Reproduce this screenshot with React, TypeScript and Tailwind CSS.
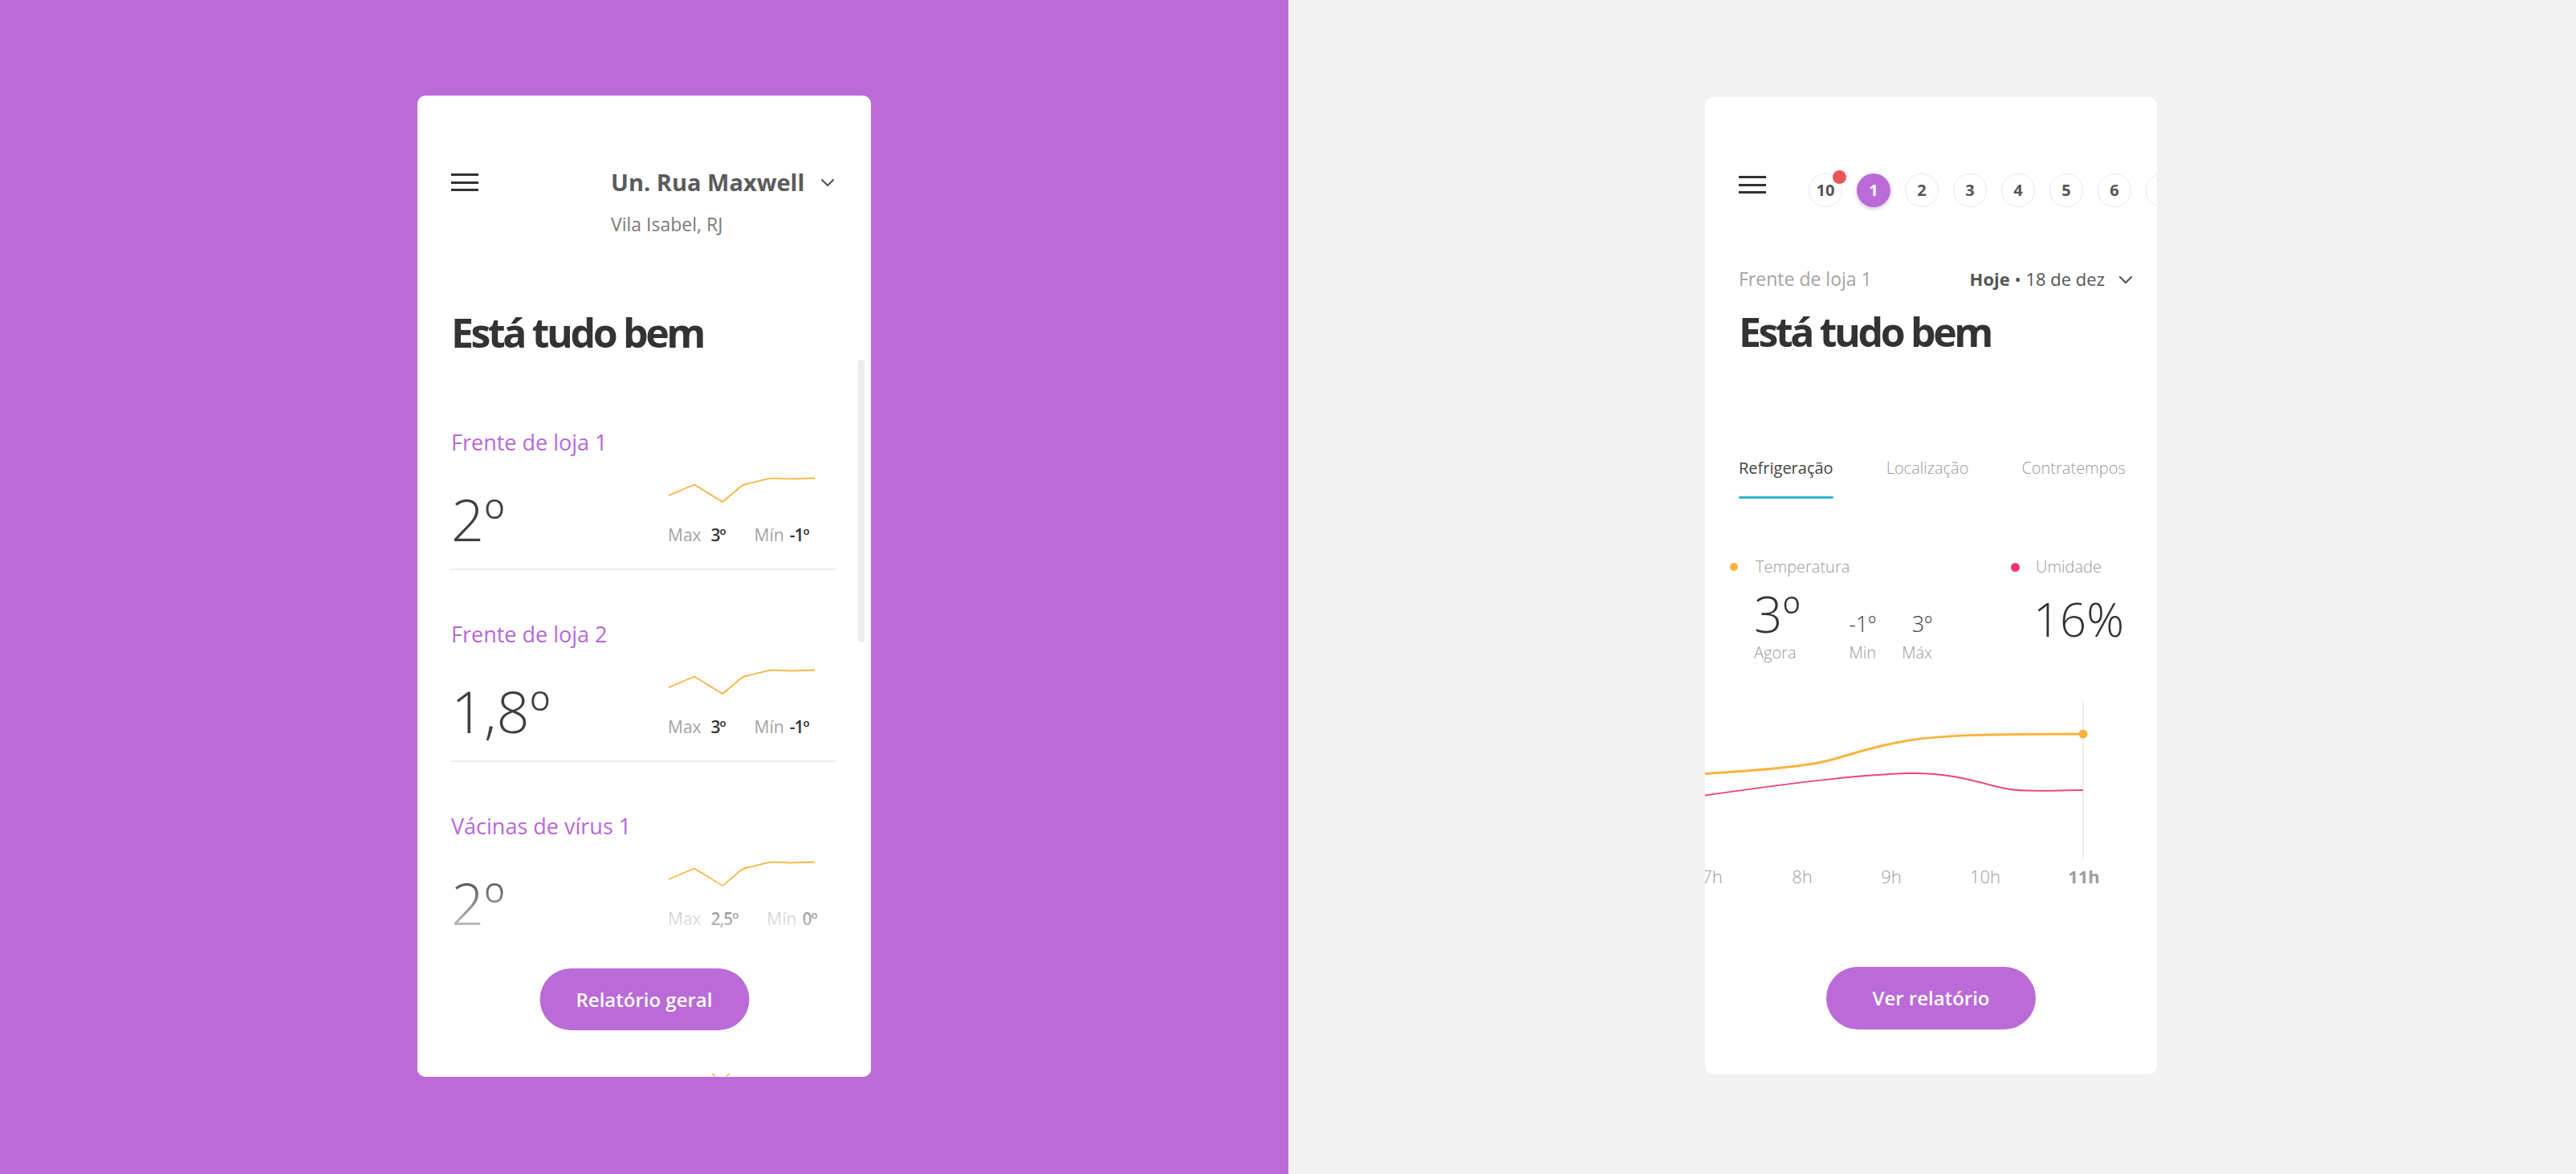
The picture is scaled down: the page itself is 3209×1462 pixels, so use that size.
const stores = [
  { name: 'Frente de loja 1', temp: '2º', max: '3º', min: '-1º' },
  { name: 'Frente de loja 2', temp: '1,8º', max: '3º', min: '-1º' },
  { name: 'Vácinas de vírus 1', temp: '2º', max: '2,5º', min: '0º' },
];

const days = ['2', '3', '4', '5', '6', '7'];

const hours = [
  { label: '7h', x: 9 },
  { label: '8h', x: 121 },
  { label: '9h', x: 232 },
  { label: '10h', x: 349 },
  { label: '11h', x: 472, bold: true },
];

function Hamburger() {
  return (
    <div className="flex h-[22px] w-[34px] shrink-0 flex-col justify-between">
      <span className="h-[3px] bg-[#333]" />
      <span className="h-[3px] bg-[#333]" />
      <span className="h-[3px] bg-[#333]" />
    </div>
  );
}

function Chevron() {
  return (
    <svg width="18" height="11" viewBox="0 0 18 11" fill="none">
      <path d="M2 2 L9 9 L16 2" stroke="#555" strokeWidth="2.2" strokeLinecap="round" strokeLinejoin="round" />
    </svg>
  );
}

function Sparkline() {
  return (
    <svg width="184" height="32" viewBox="0 0 184 32" fill="none" className="block">
      <path
        d="M1 23 L33 9.5 L68 31 L92 11 Q96 8.5 101 8 L124 2.4 Q128 1.6 132 1.7 L153 2.3 L183 1.5"
        stroke="#fbb33d"
        strokeWidth="1.8"
        strokeLinejoin="round"
      />
    </svg>
  );
}

function StoreItem({ name, temp, max, min }: { name: string; temp: string; max: string; min: string }) {
  return (
    <div className="pl-[42px] pr-[44px] pt-[62px]">
      <div className="text-[27px] leading-[36px] text-[#b868d9]">{name}</div>
      <div className="mt-[25px] flex justify-between pr-[25px]">
        <div className="mt-[16px] text-[72px] font-light leading-[72px] text-[#404040]">{temp}</div>
        <div className="w-[184px]">
          <Sparkline />
          <div className="mt-[28px] flex items-baseline text-[21px] leading-[24px]">
            <span className="text-[#a3a3a3]">Max</span>
            <span className="ml-[12px] font-semibold tracking-[-1px] text-[#333]">{max}</span>
            <span className="ml-[36px] text-[#a3a3a3]">Mín</span>
            <span className="ml-[7px] font-semibold tracking-[-1px] text-[#333]">{min}</span>
          </div>
        </div>
      </div>
      <div className="mt-[26px] h-[2px] bg-[#ececec]" />
    </div>
  );
}

function StoreListCard() {
  return (
    <div className="relative h-[1222px] w-[565px] overflow-hidden rounded-[10px] bg-white">
      <div className="flex items-start pl-[42px] pt-[90px]">
        <div className="mt-[7px]">
          <Hamburger />
        </div>
        <div className="ml-[165px]">
          <div className="flex items-start">
            <span className="text-[29px] font-bold leading-[36px] text-[#5b5b5b]">Un. Rua Maxwell</span>
            <span className="ml-[20px] mt-[13px]">
              <Chevron />
            </span>
          </div>
          <div className="mt-[20px] text-[23px] leading-[28px] text-[#7a7a7a]">Vila Isabel, RJ</div>
        </div>
      </div>

      <h1 className="mt-[93px] pl-[42px] text-[50px] font-bold leading-[56px] tracking-[-3.4px] text-[#333]">
        Está tudo bem
      </h1>

      <div className="mt-[29px]">
        {stores.map((s) => (
          <StoreItem key={s.name} {...s} />
        ))}
      </div>

      {/* scrollbar thumb */}
      <div className="absolute left-[549px] top-[329px] h-[352px] w-[8px] rounded-full bg-[#ececec]" />

      {/* fade under the list */}
      <div className="absolute inset-x-0 bottom-0 top-[966px] bg-linear-to-b from-white/0 via-white via-40% to-white" />

      {/* tip of the next sparkline peeking at the bottom edge */}
      <svg width="24" height="4" viewBox="0 0 24 4" fill="none" className="absolute bottom-0 left-[366px]">
        <path d="M1 0 L5 3 M23 0 L19 3" stroke="#fbb33d" strokeWidth="1.6" />
      </svg>

      <button className="absolute bottom-[58px] left-1/2 h-[77px] w-[261px] -translate-x-1/2 rounded-full bg-[#bb6bd8] text-[24px] font-semibold text-white">
        Relatório geral
      </button>
    </div>
  );
}

function DayBubble({ label, active, badge }: { label: string; active?: boolean; badge?: boolean }) {
  return (
    <div
      className={`relative flex h-[42px] w-[42px] shrink-0 items-center justify-center rounded-full text-[20px] font-bold ${
        active
          ? 'bg-[#bb6bd8] text-white shadow-[0_2px_5px_rgba(120,60,150,0.3)]'
          : 'border border-[#e8e8e8] text-[#555]'
      }`}
    >
      {label}
      {badge && <span className="absolute -top-[5px] left-[29px] h-[17px] w-[17px] rounded-full bg-[#ea5656]" />}
    </div>
  );
}

function TempChart() {
  return (
    <div className="mt-[46px]">
      <svg width="563" height="200" viewBox="0 0 563 200" fill="none" className="block">
        <line x1="471" y1="2" x2="471" y2="198" stroke="#efefef" strokeWidth="2" />
        <path
          d="M-10 121 C 80 108, 180 94, 254 92 C 300 91, 330 100, 369 110 C 395 116, 430 113, 471 113"
          stroke="#f2457c"
          strokeWidth="2"
        />
        <path
          d="M-10 93 C 60 89, 120 84, 150 77 C 180 70, 200 60, 254 51 C 300 44, 360 43, 471 43"
          stroke="#fbb33d"
          strokeWidth="3"
        />
        <circle cx="471" cy="43" r="5.5" fill="#fbb33d" />
      </svg>
      <div className="relative mt-[7px] h-[26px] text-[22px] leading-[26px] text-[#9d9d9d]">
        {hours.map((h) => (
          <span
            key={h.label}
            className={`absolute top-0 -translate-x-1/2 ${h.bold ? 'font-bold' : 'font-light'}`}
            style={{ left: h.x }}
          >
            {h.label}
          </span>
        ))}
      </div>
    </div>
  );
}

function DetailCard() {
  return (
    <div className="relative h-[1217px] w-[563px] overflow-hidden rounded-[10px] bg-white">
      <div className="flex items-start pl-[42px] pt-[95px]">
        <div className="mt-[3px]">
          <Hamburger />
        </div>
        <div className="ml-[53px] flex gap-[18px]">
          <DayBubble label="10" badge />
          <DayBubble label="1" active />
          {days.map((d) => (
            <DayBubble key={d} label={d} />
          ))}
        </div>
      </div>

      <div className="mt-[74px] flex items-center justify-between pl-[42px] pr-[30px]">
        <span className="text-[23px] leading-[30px] text-[#a3a3a3]">Frente de loja 1</span>
        <div className="flex items-center">
          <span className="text-[22px] leading-[30px] text-[#555]">
            <span className="font-bold">Hoje</span> • 18 de dez
          </span>
          <span className="ml-[17px] mt-[3px]">
            <Chevron />
          </span>
        </div>
      </div>

      <h1 className="mt-[23px] pl-[42px] text-[50px] font-bold leading-[56px] tracking-[-3.4px] text-[#333]">
        Está tudo bem
      </h1>

      <div className="mt-[128px] flex gap-[66px] pl-[42px] text-[20px] leading-[28px]">
        <div className="flex flex-col">
          <span className="text-[#444]">Refrigeração</span>
          <span className="mt-[21px] h-[3px] rounded-full bg-[#33b3cf]" />
        </div>
        <span className="font-light text-[#9a9a9a]">Localização</span>
        <span className="font-light text-[#9a9a9a]">Contratempos</span>
      </div>

      <div className="mt-[71px] flex items-center pl-[31px] text-[20px] font-light leading-[28px] text-[#9a9a9a]">
        <div className="flex w-[350px] items-center">
          <span className="h-[10px] w-[10px] rounded-full bg-[#fbb33d]" />
          <span className="ml-[22px]">Temperatura</span>
        </div>
        <span className="h-[11px] w-[11px] rounded-full bg-[#f2346f]" />
        <span className="ml-[20px]">Umidade</span>
      </div>

      <div className="mt-[13px] flex pl-[61px] pr-[41px]">
        <div className="flex w-[115px] flex-col">
          <span className="text-[62px] font-light leading-[62px] text-[#333]">3º</span>
          <span className="mt-[6px] text-[20px] font-light leading-[24px] text-[#9a9a9a]">Agora</span>
        </div>
        <div className="flex w-[37px] flex-col items-end">
          <span className="mt-[29px] text-[27px] font-light leading-[30px] text-[#444]">-1º</span>
          <span className="mt-[9px] text-[20px] font-light leading-[24px] text-[#9a9a9a]">Min</span>
        </div>
        <div className="ml-[25px] flex w-[45px] flex-col items-end">
          <span className="mt-[29px] text-[27px] font-light leading-[30px] text-[#444]">3º</span>
          <span className="mt-[9px] text-[20px] font-light leading-[24px] text-[#9a9a9a]">Máx</span>
        </div>
        <span className="ml-auto mt-[7px] text-[58px] font-light leading-[62px] text-[#333]">16%</span>
      </div>

      <TempChart />

      <button className="mx-auto mt-[100px] block h-[78px] w-[261px] rounded-full bg-[#bb6bd8] text-[24px] font-semibold text-white">
        Ver relatório
      </button>
    </div>
  );
}

export default function App() {
  return (
    <main className="flex h-[1462px] w-full font-['Open_Sans',sans-serif]">
      <section className="w-[1605px] shrink-0 bg-[#bb6bd8] pl-[520px] pt-[119px]">
        <StoreListCard />
      </section>
      <section className="flex-1 bg-[#f2f2f2] pl-[519px] pt-[121px]">
        <DetailCard />
      </section>
    </main>
  );
}
